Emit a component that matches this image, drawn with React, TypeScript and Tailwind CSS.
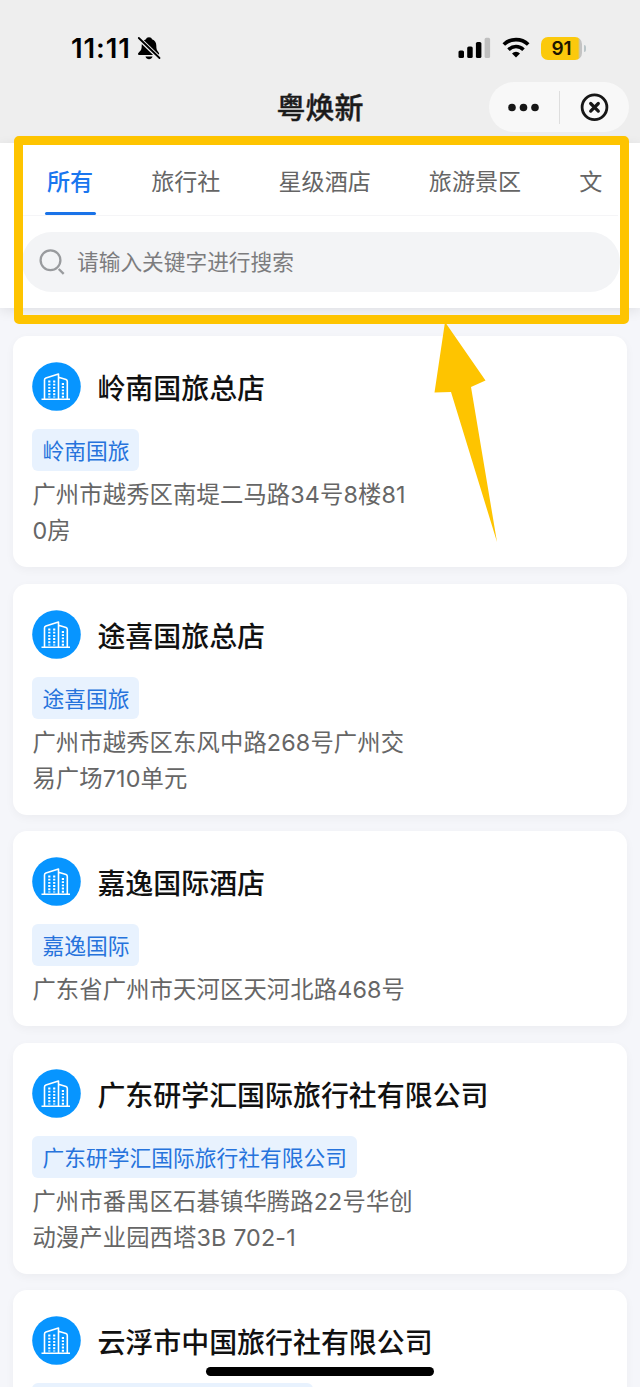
const tabs = ["所有", "旅行社", "星级酒店", "旅游景区", "文"];

type Shop = { name: string; tag: string; address?: string };

const shops: Shop[] = [
  { name: "岭南国旅总店", tag: "岭南国旅", address: "广州市越秀区南堤二马路34号8楼81\n0房" },
  { name: "途喜国旅总店", tag: "途喜国旅", address: "广州市越秀区东风中路268号广州交\n易广场710单元" },
  { name: "嘉逸国际酒店", tag: "嘉逸国际", address: "广东省广州市天河区天河北路468号" },
  {
    name: "广东研学汇国际旅行社有限公司",
    tag: "广东研学汇国际旅行社有限公司",
    address: "广州市番禺区石碁镇华腾路22号华创\n动漫产业园西塔3B 702-1",
  },
  { name: "云浮市中国旅行社有限公司", tag: "云浮市中国旅行社有限公司" },
];

function BellOff() {
  return (
    <svg className="ml-[7px] h-[24px] w-[24px]" viewBox="0 0 24 24">
      <path d="M12 1.200c-1.700 0-2.700.9-3 2.100C6 4.300 4.700 6.600 4.700 9.500c0 3.600-.5 4.900-2.500 6.500-1.900 1.700-1.500 3 .2 3h18.200c1.700 0 2.200-1.300.7-3-1.500-1.600-2-2.900-2-6.500 0-2.900-1.300-5.200-4.300-6.200C14.700 2.100 13.700 1.200 12 1.200Z" fill="#000" />
      <path d="M8.500 20.500h7c-.5 1.700-1.800 2.800-3.500 2.800s-3-1.100-3.500-2.800Z" fill="#000" />
      <path d="M1.500 2 22.500 22.300" stroke="#eee" strokeWidth="4.200" />
      <path d="M1.800 2 22.500 22" stroke="#000" strokeWidth="1.800" strokeLinecap="round" />
    </svg>
  );
}

function StatusBar() {
  return (
    <div className="flex h-[82px] items-start justify-between pl-[71px] pr-[54px] pt-[35px]">
      <div className="flex h-[26px] items-center">
        <span className="w-[59px] whitespace-nowrap text-[27.500px] font-semibold leading-[26px] tracking-[0.9px] text-black">11:11</span>
        <BellOff />
      </div>
      <div className="flex h-[26px] items-center">
        <svg className="h-[22px] w-[33px]" viewBox="0 0 33 22">
          <rect x="0.500" y="13.500" width="5.500" height="7.500" rx="1.600" />
          <rect x="9.200" y="9.500" width="5.500" height="11.500" rx="1.600" />
          <rect x="17.900" y="5" width="5.500" height="16" rx="1.600" />
          <rect x="26.600" y="0.800" width="5.500" height="20.200" rx="1.600" fill="#bfbfbf" />
        </svg>
        <svg className="ml-[11px] h-[22px] w-[28px]" viewBox="0 0 28 22" fill="none" stroke="#000">
          <path d="M1.800 7.500a17.500 17.500 0 0 1 24.400 0" strokeWidth="3.700" />
          <path d="M6.500 12.700a10.600 10.600 0 0 1 15 0" strokeWidth="3.500" />
          <path d="M14 20.500 10 16.500a5.700 5.700 0 0 1 8 0Z" fill="#000" stroke="none" />
        </svg>
        <div className="ml-[11px] flex h-[23px] w-[41px] items-center justify-center rounded-[7px] bg-[linear-gradient(90deg,#fbc90c_0_37px,#c3c3c3_39px)] text-[19px] font-semibold leading-none text-[#1c1600]">91</div>
        <div className="ml-[2px] h-[7px] w-[2px] rounded-r-full bg-[#bac5c8]" />
      </div>
    </div>
  );
}

function NavBar() {
  return (
    <div className="grid h-[61px] grid-cols-[1fr_auto_1fr] items-start">
      <div />
      <h1 className="mt-[7px] text-[29px] font-medium leading-[40px] text-[#1b1b1b] [-webkit-text-stroke:0.4px_#1b1b1b]">粤焕新</h1>
      <div className="mr-[11px] flex h-[50px] w-[140px] items-center justify-self-end rounded-full bg-[#f8f8f8]">
        <svg className="h-[50px] w-[70px]" viewBox="0 0 70 50" fill="#161616">
          <circle cx="23" cy="25.500" r="3.800" />
          <circle cx="34.500" cy="25.500" r="3.800" />
          <circle cx="46" cy="25.500" r="3.800" />
        </svg>
        <div className="h-[33px] w-px bg-[#dedede]" />
        <svg className="h-[50px] w-[69px]" viewBox="0 0 69 50" fill="none" stroke="#161616">
          <circle cx="34.500" cy="25.300" r="12.400" strokeWidth="2.800" />
          <path d="m30.700 21.500 7.600 7.600m0-7.600-7.600 7.600" strokeWidth="3.200" strokeLinecap="round" />
        </svg>
      </div>
    </div>
  );
}

function FilterPanel() {
  return (
    <section className="h-[165px] bg-white shadow-[0_3px_12px_rgba(0,0,0,0.09)]">
      <nav className="mx-[22px] flex h-[73px] gap-[58px] overflow-hidden border-b border-[#f5f5f7] pl-[25px]">
        {tabs.map((tab, i) => (
          <div key={tab} className={i === 0 ? "flex shrink-0 flex-col items-center text-[#1a76ef]" : "flex shrink-0 flex-col items-center text-[#656565]"}>
            <span className={i === 0 ? "mt-[21px] text-[23.100px] font-medium leading-[36px]" : "mt-[21px] text-[23.100px] leading-[36px]"}>{tab}</span>
            {i === 0 && <span className="-mx-[3px] mt-[12px] h-[3px] w-[51px] rounded-full bg-[#1a73e8]" />}
          </div>
        ))}
      </nav>
      <div className="ml-[22px] mr-[20px] mt-[16px] flex h-[60px] items-center rounded-full bg-[#f3f4f6] pl-[16px]">
        <svg className="h-[28px] w-[28px]" viewBox="0 0 28 28" fill="none" stroke="#999b9e" strokeWidth="2.300">
          <circle cx="12.500" cy="12.200" r="9.900" />
          <path d="m20.700 21 5 4.900" />
        </svg>
        <span className="ml-[11px] text-[21.700px] leading-[32px] text-[#7c7c7e]">请输入关键字进行搜索</span>
      </div>
    </section>
  );
}

function Building() {
  return (
    <svg className="h-[49px] w-[49px] shrink-0" viewBox="0 0 49 49" fill="none" stroke="#fff">
      <circle cx="24.500" cy="24.500" r="24.300" fill="#0795ff" stroke="none" />
      <path d="M9.500 37.300h28.500M12.500 37V18q0-1.500 1.400-2l12.600-4V37M26.500 15.300l7.500 2.200q1.300.5 1.300 2V37" strokeWidth="1.600" strokeLinejoin="round" />
      <path d="M17.300 18.500v17M22.200 18.500v17M30.900 21v15" strokeWidth="2.200" strokeDasharray="1.900 1.300" />
    </svg>
  );
}

function ShopCard({ name, tag, address }: Shop) {
  return (
    <article className="flex shrink-0 flex-col items-start rounded-[14px] bg-white pb-[18px] pl-[19.400px] pt-[26px] shadow-[0_3px_10px_rgba(0,0,0,0.04)]">
      <div className="flex h-[49px] items-center">
        <Building />
        <h2 className="ml-[16px] whitespace-nowrap pt-[5px] text-[27.950px] font-medium leading-[40px] text-[#111]">{name}</h2>
      </div>
      <span className="mt-[18px] h-[42px] whitespace-nowrap rounded-[6px] bg-[#e8f2fe] px-[10px] text-[21.750px] leading-[44px] text-[#2673dc]">{tag}</span>
      {address && <p className="mt-[6px] whitespace-pre text-[23.300px] leading-[36px] tracking-[0.150px] text-[#666]">{address}</p>}
    </article>
  );
}

export default function App() {
  return (
    <main className="relative h-[1387px] w-[640px] overflow-hidden bg-[#f5f6fa] font-['Inter','Noto_Sans_CJK_SC',sans-serif]">
      <header className="h-[143px] bg-[#eee]">
        <StatusBar />
        <NavBar />
      </header>
      <FilterPanel />
      <div className="flex flex-col gap-[16.500px] px-[13px] pt-[28px]">
        {shops.map((shop) => (
          <ShopCard key={shop.name} {...shop} />
        ))}
      </div>
      <div className="absolute left-[14px] top-[136px] h-[188px] w-[615px] rounded-[5px] border-[9px] border-[#fec400]" />
      <svg className="absolute left-[430px] top-[320px] h-[225px] w-[60px] overflow-visible" viewBox="0 0 60 225">
        <path d="M15 2 55.500 60.500 41 67 67 222 21 72 4.500 72.500Z" fill="#fec400" />
      </svg>
      <div className="absolute left-[206px] top-[1367px] h-[9px] w-[228px] rounded-full bg-black" />
    </main>
  );
}
